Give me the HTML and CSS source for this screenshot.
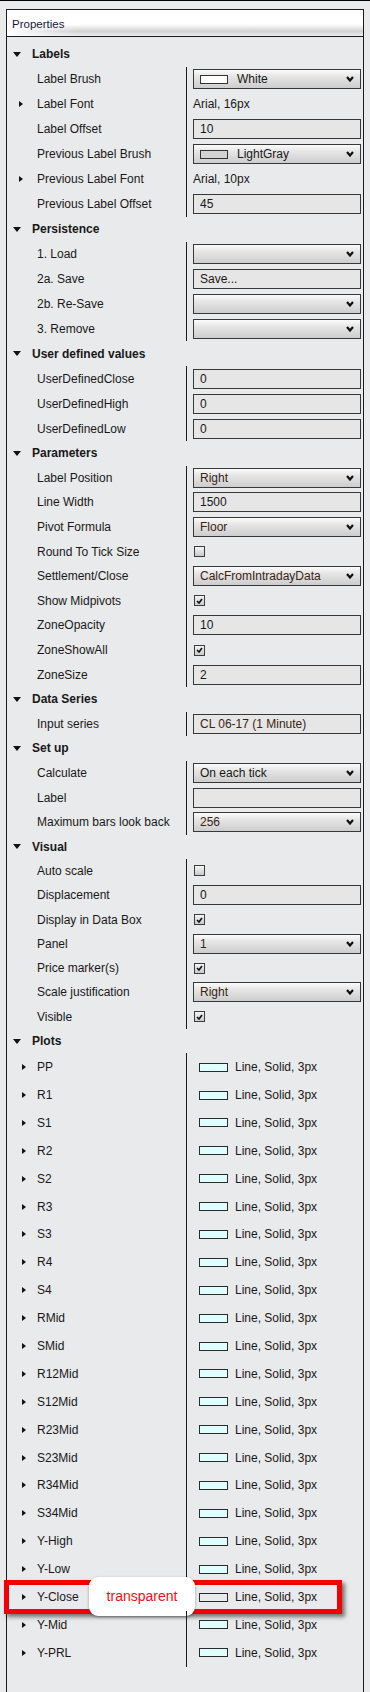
FILE: index.html
```html
<!DOCTYPE html>
<html lang="en">
<head>
    <meta charset="UTF-8">
    <title>Properties</title>
    <link rel="stylesheet" href="styles.css">
</head>
<body>
<div class="frame">
    <div class="panel">
        <div class="panel-title">Properties</div>

        <div class="props">
            <!-- Labels -->
            <div class="group roomy">
                <div class="group-head"><span class="down"></span>Labels</div>
                <div class="row">
                    <div class="label"><span class="exp"></span>Label Brush</div>
                    <div class="value"><div class="combo"><span class="brush white"></span>White<svg class="chev" viewBox="0 0 8 6"><path d="M1 1 L4 4.5 L7 1"/></svg></div></div>
                </div>
                <div class="row">
                    <div class="label"><span class="exp"><span class="right"></span></span>Label Font</div>
                    <div class="value"><span class="plain">Arial, 16px</span></div>
                </div>
                <div class="row">
                    <div class="label"><span class="exp"></span>Label Offset</div>
                    <div class="value"><div class="field">10</div></div>
                </div>
                <div class="row">
                    <div class="label"><span class="exp"></span>Previous Label Brush</div>
                    <div class="value"><div class="combo"><span class="brush gray"></span>LightGray<svg class="chev" viewBox="0 0 8 6"><path d="M1 1 L4 4.5 L7 1"/></svg></div></div>
                </div>
                <div class="row">
                    <div class="label"><span class="exp"><span class="right"></span></span>Previous Label Font</div>
                    <div class="value"><span class="plain">Arial, 10px</span></div>
                </div>
                <div class="row">
                    <div class="label"><span class="exp"></span>Previous Label Offset</div>
                    <div class="value"><div class="field">45</div></div>
                </div>
            </div>

            <!-- Persistence -->
            <div class="group roomy">
                <div class="group-head"><span class="down"></span>Persistence</div>
                <div class="row">
                    <div class="label"><span class="exp"></span>1. Load</div>
                    <div class="value"><div class="combo"><svg class="chev" viewBox="0 0 8 6"><path d="M1 1 L4 4.5 L7 1"/></svg></div></div>
                </div>
                <div class="row">
                    <div class="label"><span class="exp"></span>2a. Save</div>
                    <div class="value"><div class="field">Save...</div></div>
                </div>
                <div class="row">
                    <div class="label"><span class="exp"></span>2b. Re-Save</div>
                    <div class="value"><div class="combo"><svg class="chev" viewBox="0 0 8 6"><path d="M1 1 L4 4.5 L7 1"/></svg></div></div>
                </div>
                <div class="row">
                    <div class="label"><span class="exp"></span>3. Remove</div>
                    <div class="value"><div class="combo"><svg class="chev" viewBox="0 0 8 6"><path d="M1 1 L4 4.5 L7 1"/></svg></div></div>
                </div>
            </div>

            <!-- User defined values -->
            <div class="group roomy">
                <div class="group-head"><span class="down"></span>User defined values</div>
                <div class="row">
                    <div class="label"><span class="exp"></span>UserDefinedClose</div>
                    <div class="value"><div class="field">0</div></div>
                </div>
                <div class="row">
                    <div class="label"><span class="exp"></span>UserDefinedHigh</div>
                    <div class="value"><div class="field">0</div></div>
                </div>
                <div class="row">
                    <div class="label"><span class="exp"></span>UserDefinedLow</div>
                    <div class="value"><div class="field">0</div></div>
                </div>
            </div>

            <!-- Parameters -->
            <div class="group">
                <div class="group-head"><span class="down"></span>Parameters</div>
                <div class="row">
                    <div class="label"><span class="exp"></span>Label Position</div>
                    <div class="value"><div class="combo enum">Right<svg class="chev" viewBox="0 0 8 6"><path d="M1 1 L4 4.5 L7 1"/></svg></div></div>
                </div>
                <div class="row">
                    <div class="label"><span class="exp"></span>Line Width</div>
                    <div class="value"><div class="field">1500</div></div>
                </div>
                <div class="row">
                    <div class="label"><span class="exp"></span>Pivot Formula</div>
                    <div class="value"><div class="combo enum">Floor<svg class="chev" viewBox="0 0 8 6"><path d="M1 1 L4 4.5 L7 1"/></svg></div></div>
                </div>
                <div class="row">
                    <div class="label"><span class="exp"></span>Round To Tick Size</div>
                    <div class="value"><span class="check"></span></div>
                </div>
                <div class="row">
                    <div class="label"><span class="exp"></span>Settlement/Close</div>
                    <div class="value"><div class="combo enum">CalcFromIntradayData<svg class="chev" viewBox="0 0 8 6"><path d="M1 1 L4 4.5 L7 1"/></svg></div></div>
                </div>
                <div class="row">
                    <div class="label"><span class="exp"></span>Show Midpivots</div>
                    <div class="value"><span class="check"><svg viewBox="0 0 7 6"><path d="M1 3 L3 5 L6 1"/></svg></span></div>
                </div>
                <div class="row">
                    <div class="label"><span class="exp"></span>ZoneOpacity</div>
                    <div class="value"><div class="field">10</div></div>
                </div>
                <div class="row">
                    <div class="label"><span class="exp"></span>ZoneShowAll</div>
                    <div class="value"><span class="check"><svg viewBox="0 0 7 6"><path d="M1 3 L3 5 L6 1"/></svg></span></div>
                </div>
                <div class="row">
                    <div class="label"><span class="exp"></span>ZoneSize</div>
                    <div class="value"><div class="field">2</div></div>
                </div>
            </div>

            <!-- Data Series -->
            <div class="group">
                <div class="group-head"><span class="down"></span>Data Series</div>
                <div class="row">
                    <div class="label"><span class="exp"></span>Input series</div>
                    <div class="value"><div class="field enum">CL 06-17 (1 Minute)</div></div>
                </div>
            </div>

            <!-- Set up -->
            <div class="group">
                <div class="group-head"><span class="down"></span>Set up</div>
                <div class="row">
                    <div class="label"><span class="exp"></span>Calculate</div>
                    <div class="value"><div class="combo">On each tick<svg class="chev" viewBox="0 0 8 6"><path d="M1 1 L4 4.5 L7 1"/></svg></div></div>
                </div>
                <div class="row">
                    <div class="label"><span class="exp"></span>Label</div>
                    <div class="value"><div class="field"></div></div>
                </div>
                <div class="row">
                    <div class="label"><span class="exp"></span>Maximum bars look back</div>
                    <div class="value"><div class="combo enum">256<svg class="chev" viewBox="0 0 8 6"><path d="M1 1 L4 4.5 L7 1"/></svg></div></div>
                </div>
            </div>

            <!-- Visual -->
            <div class="group tight">
                <div class="group-head"><span class="down"></span>Visual</div>
                <div class="row">
                    <div class="label"><span class="exp"></span>Auto scale</div>
                    <div class="value"><span class="check"></span></div>
                </div>
                <div class="row">
                    <div class="label"><span class="exp"></span>Displacement</div>
                    <div class="value"><div class="field">0</div></div>
                </div>
                <div class="row">
                    <div class="label"><span class="exp"></span>Display in Data Box</div>
                    <div class="value"><span class="check"><svg viewBox="0 0 7 6"><path d="M1 3 L3 5 L6 1"/></svg></span></div>
                </div>
                <div class="row">
                    <div class="label"><span class="exp"></span>Panel</div>
                    <div class="value"><div class="combo enum">1<svg class="chev" viewBox="0 0 8 6"><path d="M1 1 L4 4.5 L7 1"/></svg></div></div>
                </div>
                <div class="row">
                    <div class="label"><span class="exp"></span>Price marker(s)</div>
                    <div class="value"><span class="check"><svg viewBox="0 0 7 6"><path d="M1 3 L3 5 L6 1"/></svg></span></div>
                </div>
                <div class="row">
                    <div class="label"><span class="exp"></span>Scale justification</div>
                    <div class="value"><div class="combo enum">Right<svg class="chev" viewBox="0 0 8 6"><path d="M1 1 L4 4.5 L7 1"/></svg></div></div>
                </div>
                <div class="row">
                    <div class="label"><span class="exp"></span>Visible</div>
                    <div class="value"><span class="check"><svg viewBox="0 0 7 6"><path d="M1 3 L3 5 L6 1"/></svg></span></div>
                </div>
            </div>

            <!-- Plots -->
            <div class="group tight plots">
                <div class="group-head"><span class="down"></span>Plots</div>
                <div class="row"><div class="label"><span class="exp"><span class="right"></span></span>PP</div><div class="value"><span class="stroke"></span>Line, Solid, 3px</div></div>
                <div class="row"><div class="label"><span class="exp"><span class="right"></span></span>R1</div><div class="value"><span class="stroke"></span>Line, Solid, 3px</div></div>
                <div class="row"><div class="label"><span class="exp"><span class="right"></span></span>S1</div><div class="value"><span class="stroke"></span>Line, Solid, 3px</div></div>
                <div class="row"><div class="label"><span class="exp"><span class="right"></span></span>R2</div><div class="value"><span class="stroke"></span>Line, Solid, 3px</div></div>
                <div class="row"><div class="label"><span class="exp"><span class="right"></span></span>S2</div><div class="value"><span class="stroke"></span>Line, Solid, 3px</div></div>
                <div class="row"><div class="label"><span class="exp"><span class="right"></span></span>R3</div><div class="value"><span class="stroke"></span>Line, Solid, 3px</div></div>
                <div class="row"><div class="label"><span class="exp"><span class="right"></span></span>S3</div><div class="value"><span class="stroke"></span>Line, Solid, 3px</div></div>
                <div class="row"><div class="label"><span class="exp"><span class="right"></span></span>R4</div><div class="value"><span class="stroke"></span>Line, Solid, 3px</div></div>
                <div class="row"><div class="label"><span class="exp"><span class="right"></span></span>S4</div><div class="value"><span class="stroke"></span>Line, Solid, 3px</div></div>
                <div class="row"><div class="label"><span class="exp"><span class="right"></span></span>RMid</div><div class="value"><span class="stroke"></span>Line, Solid, 3px</div></div>
                <div class="row"><div class="label"><span class="exp"><span class="right"></span></span>SMid</div><div class="value"><span class="stroke"></span>Line, Solid, 3px</div></div>
                <div class="row"><div class="label"><span class="exp"><span class="right"></span></span>R12Mid</div><div class="value"><span class="stroke"></span>Line, Solid, 3px</div></div>
                <div class="row"><div class="label"><span class="exp"><span class="right"></span></span>S12Mid</div><div class="value"><span class="stroke"></span>Line, Solid, 3px</div></div>
                <div class="row"><div class="label"><span class="exp"><span class="right"></span></span>R23Mid</div><div class="value"><span class="stroke"></span>Line, Solid, 3px</div></div>
                <div class="row"><div class="label"><span class="exp"><span class="right"></span></span>S23Mid</div><div class="value"><span class="stroke"></span>Line, Solid, 3px</div></div>
                <div class="row"><div class="label"><span class="exp"><span class="right"></span></span>R34Mid</div><div class="value"><span class="stroke"></span>Line, Solid, 3px</div></div>
                <div class="row"><div class="label"><span class="exp"><span class="right"></span></span>S34Mid</div><div class="value"><span class="stroke"></span>Line, Solid, 3px</div></div>
                <div class="row"><div class="label"><span class="exp"><span class="right"></span></span>Y-High</div><div class="value"><span class="stroke"></span>Line, Solid, 3px</div></div>
                <div class="row"><div class="label"><span class="exp"><span class="right"></span></span>Y-Low</div><div class="value"><span class="stroke"></span>Line, Solid, 3px</div></div>
                <div class="row">
                    <div class="label"><span class="exp"><span class="right"></span></span>Y-Close</div>
                    <div class="value"><span class="stroke clear"></span>Line, Solid, 3px</div>
                    <!-- annotation over the row -->
                    <div class="highlight"></div>
                    <div class="callout">transparent</div>
                </div>
                <div class="row"><div class="label"><span class="exp"><span class="right"></span></span>Y-Mid</div><div class="value"><span class="stroke"></span>Line, Solid, 3px</div></div>
                <div class="row"><div class="label"><span class="exp"><span class="right"></span></span>Y-PRL</div><div class="value"><span class="stroke"></span>Line, Solid, 3px</div></div>
            </div>
        </div>
    </div>
</div>
</body>
</html>
```

FILE: styles.css
```css
body {
    margin: 0;
    background-color: #e9eaec;
    font-family: "Liberation Sans", Arial, sans-serif;
    font-size: 12px;
    color: #181818;
    overflow: hidden;
}

.frame {
    border-top: 1px solid #000;
    padding: 8px 6px 0 6px;
}

.panel {
    width: 358px;
    box-sizing: border-box;
    min-height: 1683px;
    border: 1px solid #1c1c1c;
    border-bottom: none;
}

.panel-title {
    height: 24px;
    padding: 2px 0 0 5px;
    display: flex;
    align-items: center;
    font-size: 11.5px;
    color: #14143c;
    border-bottom: 1px solid #1c1c1c;
    background:
        linear-gradient(to right, #fff 0, rgba(255, 255, 255, 0) 70px),
        linear-gradient(to bottom, #fff 0, #fff 55%, #d2d2d2 82%, #ededed 100%);
}

.props {
    padding-top: 5px;
}

/* row pitch differs slightly per block in the original grid */
.group {
    --row-h: 24.6px;
}

.group.roomy {
    --row-h: 24.95px;
}

.group.tight {
    --row-h: 24.3px;
}

/* category header */
.group-head {
    height: var(--row-h);
    display: flex;
    align-items: center;
    padding-left: 6px;
    font-weight: bold;
}

.down {
    width: 0;
    height: 0;
    border-left: 4px solid transparent;
    border-right: 4px solid transparent;
    border-top: 5px solid #111;
    margin-right: 11px;
}

/* property row */
.row {
    position: relative;
    height: var(--row-h);
    display: grid;
    grid-template-columns: 179px 1fr;
}

.row .label {
    display: flex;
    align-items: center;
    padding-left: 12px;
    white-space: nowrap;
}

.exp {
    width: 18px;
    display: flex;
    align-items: center;
}

.right {
    width: 0;
    height: 0;
    border-top: 3.5px solid transparent;
    border-bottom: 3.5px solid transparent;
    border-left: 4px solid #111;
}

.row .value {
    border-left: 1px solid #1c1c1c;
    padding: 0 2px 0 6px;
    display: flex;
    align-items: center;
}

.combo,
.field {
    box-sizing: border-box;
    width: 168px;
    height: 20px;
    border: 1px solid #383838;
    display: flex;
    align-items: center;
    padding: 0 5px 0 6px;
    white-space: nowrap;
}

.combo {
    background: linear-gradient(to bottom, #fbfbfb 0%, #e6e6e6 35%, #cdcdcd 100%);
}

.field {
    background-color: #e6e6e6;
}

.enum {
    color: #3a2412;
}

.chev {
    width: 8px;
    height: 6px;
    margin-left: auto;
    margin-right: 1px;
}

.chev path {
    fill: none;
    stroke: #111;
    stroke-width: 2.2;
}

.brush {
    box-sizing: border-box;
    width: 28px;
    height: 9px;
    border: 1px solid #333;
    margin-right: 9px;
}

.brush.white {
    background-color: #fff;
}

.brush.gray {
    background-color: #d3d3d3;
}

.check {
    box-sizing: border-box;
    width: 11px;
    height: 11px;
    margin-left: 1px;
    border: 1px solid #3c3c3c;
    background: linear-gradient(to bottom, #f6f6f6, #c9c9c9);
    display: flex;
    align-items: center;
    justify-content: center;
}

.check svg {
    width: 7px;
    height: 6px;
}

.check path {
    fill: none;
    stroke: #111;
    stroke-width: 1.6;
}

/* plots */
.plots .row {
    height: 27.9px;
}

.plots .row .label {
    padding-left: 15px;
}

.plots .exp {
    width: 15px;
}

.stroke {
    box-sizing: border-box;
    width: 29px;
    height: 9px;
    margin: 0 7px 0 6px;
    border: 1px solid #2a2a2a;
    background-color: #e0ffff;
}

.stroke.clear {
    background-color: transparent;
}

/* red annotation on Y-Close */
.highlight {
    position: absolute;
    left: -3px;
    right: 21px;
    top: -3px;
    bottom: -3px;
    border: 5px solid #f40000;
    box-shadow: 3px 3px 4px rgba(0, 0, 0, 0.5);
}

.callout {
    position: absolute;
    left: 82px;
    top: -6.5px;
    width: 106px;
    height: 39px;
    border-radius: 9px;
    background-color: #fff;
    box-shadow: 0 1px 3px rgba(0, 0, 0, 0.35);
    color: #f01010;
    font-size: 14px;
    display: flex;
    align-items: center;
    justify-content: center;
}
```
